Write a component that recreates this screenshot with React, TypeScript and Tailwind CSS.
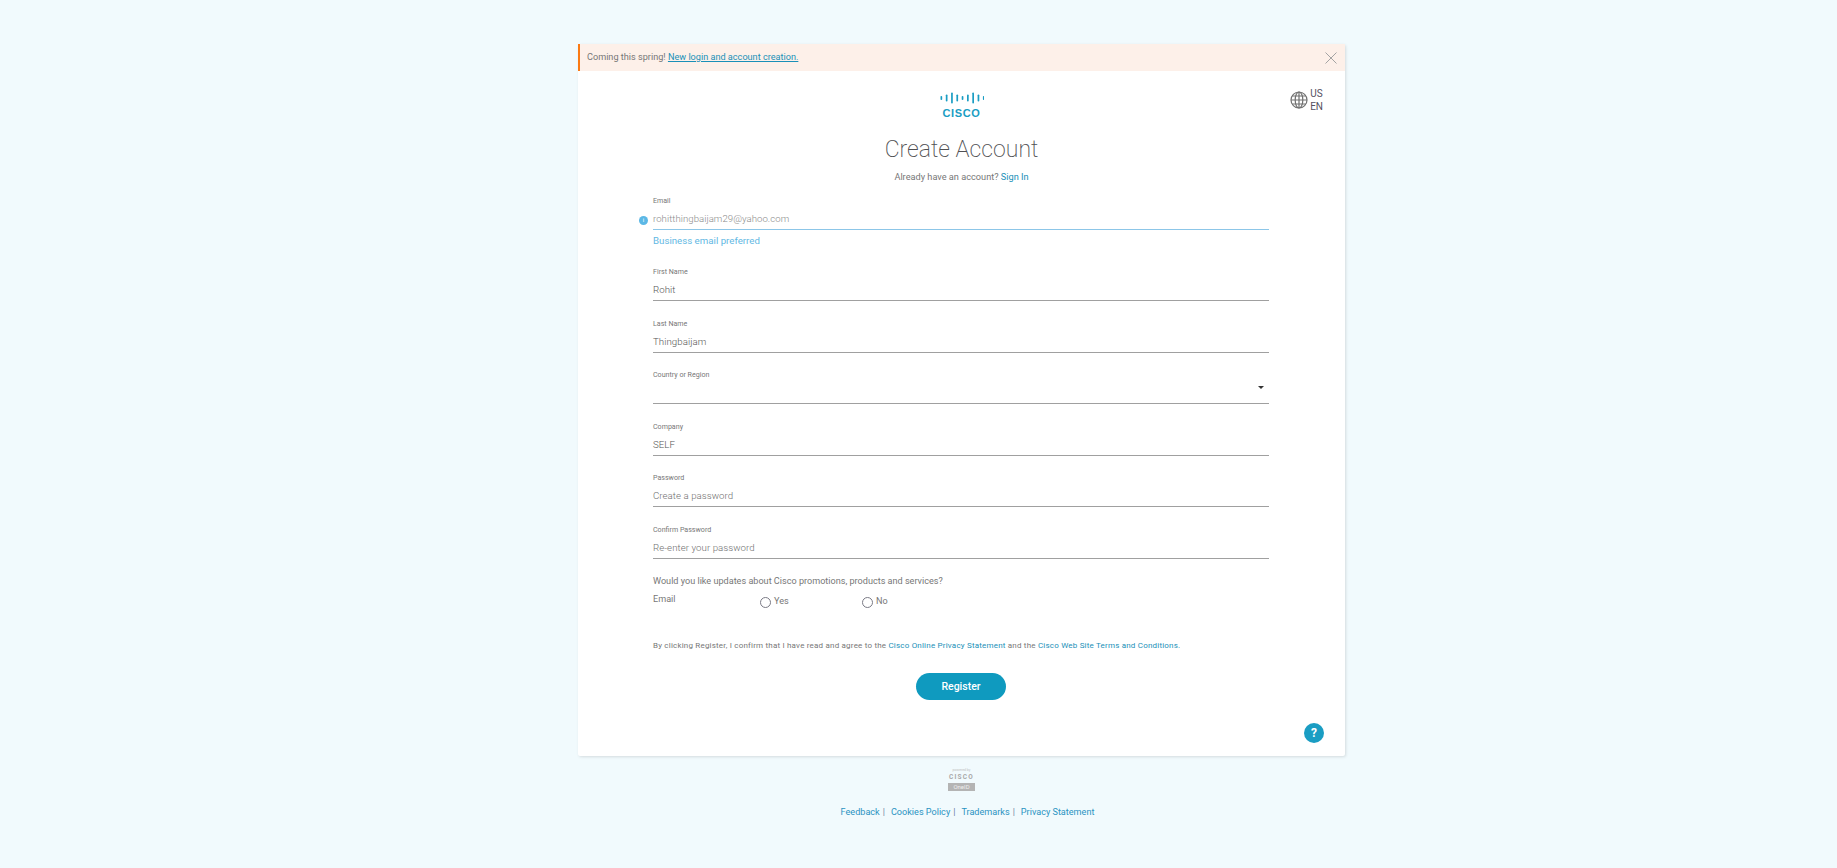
function CiscoLogo() {
  const heights = [4, 7, 11, 7, 4, 7, 11, 7, 4];
  return (
    <div className="flex flex-col items-center">
      <svg width="44" height="12" viewBox="0 0 44 12" className="block">
        {heights.map((h, i) => (
          <rect key={i} x={i * 5.3 + 0.5} y={6 - h / 2} width="1.7" height={h} rx="0.8" fill="#1a9dc3" />
        ))}
      </svg>
      <span className="mt-[4px] text-[11px] leading-[11px] font-bold tracking-[0.6px] text-[#1a9dc3] font-['Liberation_Sans',sans-serif]">
        CISCO
      </span>
    </div>
  );
}

function GlobeIcon() {
  return (
    <svg width="18" height="18" viewBox="0 0 18 18" fill="none" stroke="#707070" strokeWidth="1.2">
      <circle cx="9" cy="9" r="8" />
      <ellipse cx="9" cy="9" rx="3.8" ry="8" />
      <path d="M9 1v16M1 9h16M2.2 5h13.6M2.2 13h13.6" />
    </svg>
  );
}

function CloseIcon() {
  return (
    <svg width="12" height="12" viewBox="0 0 12 12" fill="none" stroke="#a3a3a3" strokeWidth="1">
      <path d="M0.5 0.5l11 11M11.5 0.5l-11 11" />
    </svg>
  );
}

type FieldProps = {
  label: string;
  value?: string;
  placeholder?: boolean;
  select?: boolean;
};

function Field({ label, value, placeholder, select }: FieldProps) {
  return (
    <div className="relative">
      <div className="text-[7.1px] leading-[10px] text-[#777777]">{label}</div>
      <div className="mt-[5px] h-[18px] border-b border-[#a0a0a0] text-[9.7px] font-light leading-[16px] tracking-[0.05px] box-content">
        <span className={placeholder ? "text-[#6f6f6f]" : "text-[#555555]"}>{value}</span>
        {select && (
          <span className="absolute right-[5px] top-[16px] h-0 w-0 border-x-[3px] border-t-[3px] border-x-transparent border-t-[#333333]" />
        )}
      </div>
    </div>
  );
}

export default function App() {
  return (
    <div className="min-h-[868px] bg-[#f1fafd] font-['Roboto',sans-serif] text-[#6b6b6b] pt-[44px] pl-[578px]">
      <div className="w-[767px] h-[712px] bg-white rounded-[2px] shadow-[1px_1px_3px_rgba(0,0,0,0.12)] flex flex-col">
        <div className="h-[27px] shrink-0 bg-[#fdf0e9] border-l-2 border-[#fb7a14] flex items-center justify-between pl-[7px] pr-[8px]">
          <span className="text-[9.15px] text-[#777777]">
            Coming this spring!{" "}
            <a className="text-[#1a90b8] underline">New login and account creation.</a>
          </span>
          <CloseIcon />
        </div>

        <div className="relative flex-1">
          <div className="absolute right-[22px] top-[16px] flex items-center gap-[2px]">
            <GlobeIcon />
            <div className="text-[10px] leading-[13px] text-[#55505f]">
              US
              <br />
              EN
            </div>
          </div>

          <div className="flex flex-col items-center pt-[21px]">
            <CiscoLogo />
            <h1 className="mt-[16px] text-[23px] leading-[30px] font-extralight text-[#505053]">Create Account</h1>
            <p className="mt-[6px] text-[9.2px] leading-[12px] text-[#777777]">
              Already have an account? <a className="text-[#1a90b8]">Sign In</a>
            </p>
          </div>

          <div className="ml-[75px] mr-[76px] mt-[13px]">
            <div className="h-[71px] relative">
              <div className="text-[7.1px] leading-[10px] text-[#777777]">Email</div>
              <span className="absolute left-[-14px] top-[19.5px] flex h-[9px] w-[9px] items-center justify-center rounded-full bg-[#5cb8e6] text-[6px] leading-none text-white">
                i
              </span>
              <div className="mt-[5px] h-[18px] border-b border-[#8cc6e8] text-[9.6px] font-light leading-[16px] tracking-[0.05px] box-content text-[#8a8a8a]">
                rohitthingbaijam29@yahoo.com
              </div>
              <div className="mt-[4px] text-[9.7px] leading-[14px] text-[#62b8e3]">Business email preferred</div>
            </div>

            <div className="flex flex-col gap-[17.6px]">
              <Field label="First Name" value="Rohit" />
              <Field label="Last Name" value="Thingbaijam" />
              <Field label="Country or Region" select />
              <Field label="Company" value="SELF" />
              <Field label="Password" value="Create a password" placeholder />
              <Field label="Confirm Password" value="Re-enter your password" placeholder />
            </div>

            <p className="mt-[15px] text-[9.1px] leading-[14px] text-[#777777]">
              Would you like updates about Cisco promotions, products and services?
            </p>
            <div className="mt-[4px] flex text-[9.1px] leading-[14px] text-[#777777]">
              <span className="w-[107px]">Email</span>
              <label className="w-[102px] flex items-start gap-[3px]">
                <span className="h-[11px] w-[11px] mt-[5px] rounded-full border-[1.5px] border-[#7a7a85]" />
                <span className="mt-[2px]">Yes</span>
              </label>
              <label className="flex items-start gap-[3px]">
                <span className="h-[11px] w-[11px] mt-[5px] rounded-full border-[1.5px] border-[#7a7a85]" />
                <span className="mt-[2px]">No</span>
              </label>
            </div>

            <p className="mt-[32px] text-[8px] leading-[12px] tracking-[0.2px] text-[#777777] whitespace-nowrap">
              By clicking Register, I confirm that I have read and agree to the{" "}
              <a className="text-[#1a90b8]">Cisco Online Privacy Statement</a> and the{" "}
              <a className="text-[#1a90b8]">Cisco Web Site Terms and Conditions.</a>
            </p>

            <div className="mt-[21px] flex justify-center">
              <button className="h-[27px] w-[90px] rounded-full bg-[#0f9abf] text-[10.5px] font-medium text-white">
                Register
              </button>
            </div>
          </div>

          <span className="absolute right-[21px] bottom-[13px] flex h-[20px] w-[20px] items-center justify-center rounded-full bg-[#1a9dc3] text-[12px] font-bold text-white">
            ?
          </span>
        </div>
      </div>

      <div className="w-[767px] mt-[12px] flex flex-col items-center">
        <div className="flex flex-col items-center w-[27px]">
          <span className="text-[3.5px] leading-[4px] text-[#c0c0c0]">powered by</span>
          <span className="mt-[2px] text-[6.5px] leading-[7px] font-bold tracking-[1.2px] text-[#a8a8a8]">CISCO</span>
          <span className="mt-[2px] w-full bg-[#b4b4b4] text-center text-[6px] leading-[8px] text-[#eeeeee]">OneID</span>
        </div>
        <div className="mt-[14px] ml-[12px] flex text-[9.1px] leading-[14px] text-[#2a93c2]">
          <a>Feedback</a>
          <span className="ml-[3px] mr-[6px] text-[#6b7ba0]">|</span>
          <a>Cookies Policy</a>
          <span className="ml-[3px] mr-[6px] text-[#6b7ba0]">|</span>
          <a>Trademarks</a>
          <span className="ml-[3px] mr-[6px] text-[#6b7ba0]">|</span>
          <a>Privacy Statement</a>
        </div>
      </div>
    </div>
  );
}
